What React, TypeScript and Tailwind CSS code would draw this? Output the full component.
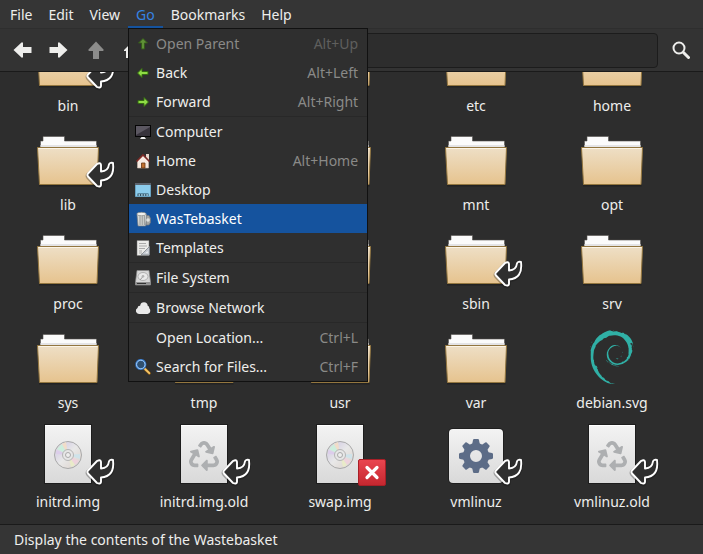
import type { ReactNode } from "react";
import { FaRecycle } from "react-icons/fa";
import { SiDebian } from "react-icons/si";

type Emblem = "link" | "broken";
type Kind = "folder" | "disc" | "backup" | "binary" | "debian";

// folders under the open menu carry no label
const files: { name?: string; kind: Kind; emblem?: Emblem }[] = [
  { name: "bin", kind: "folder", emblem: "link" },
  { kind: "folder" },
  { kind: "folder" },
  { name: "etc", kind: "folder" },
  { name: "home", kind: "folder" },
  { name: "lib", kind: "folder", emblem: "link" },
  { kind: "folder" },
  { kind: "folder" },
  { name: "mnt", kind: "folder" },
  { name: "opt", kind: "folder" },
  { name: "proc", kind: "folder" },
  { kind: "folder" },
  { kind: "folder" },
  { name: "sbin", kind: "folder", emblem: "link" },
  { name: "srv", kind: "folder" },
  { name: "sys", kind: "folder" },
  { name: "tmp", kind: "folder" },
  { name: "usr", kind: "folder" },
  { name: "var", kind: "folder" },
  { name: "debian.svg", kind: "debian" },
  { name: "initrd.img", kind: "disc", emblem: "link" },
  { name: "initrd.img.old", kind: "backup", emblem: "link" },
  { name: "swap.img", kind: "disc", emblem: "broken" },
  { name: "vmlinuz", kind: "binary", emblem: "link" },
  { name: "vmlinuz.old", kind: "backup", emblem: "link" },
];

const greenArrow = "M2.500 8 7 3.500v3h6v3H7v3z";

const upIcon = (
  <svg viewBox="0 0 16 16" className="size-4">
    <path d={greenArrow} transform="rotate(90 8 8)" fill="#5f9136" stroke="#34591b" />
  </svg>
);
const leftIcon = (
  <svg viewBox="0 0 16 16" className="size-4">
    <path d={greenArrow} fill="#8fdc45" stroke="#356b10" />
  </svg>
);
const rightIcon = (
  <svg viewBox="0 0 16 16" className="size-4">
    <path d={greenArrow} transform="rotate(180 8 8)" fill="#8fdc45" stroke="#356b10" />
  </svg>
);
const computerIcon = (
  <svg viewBox="0 0 16 16" className="size-4">
    <rect x="0.5" y="1.5" width="15" height="11" fill="#37333c" stroke="#050505" />
    <path d="M1 2h14v1L1 11z" fill="#5b5761" />
    <path d="M6.500 13h3l1.500 2h-6z" fill="#f2f2f2" />
  </svg>
);
const houseIcon = (
  <svg viewBox="0 0 16 16" className="size-4">
    <path d="M11 1h3v6h-3z" fill="#e6d6cc" />
    <path d="M2.500 7.500 8 2l5.500 5.500V15h-11z" fill="#f8ebe2" stroke="#cdb9ab" strokeWidth="0.6" />
    <path d="M6.500 15v-5h3.500v5z" fill="#c0702f" stroke="#6b3513" strokeWidth="0.8" />
    <path d="M1.500 8.500 8 2l6.500 6.500" fill="none" stroke="#7c2a26" strokeWidth="1.600" />
  </svg>
);
const desktopIcon = (
  <svg viewBox="0 0 16 16" className="size-4">
    <path d="M.500 1.500h15v13H.500z" fill="#8cccec" stroke="#6aa3c2" />
    <path d="M0 1h16v2H0z" fill="#5b636d" />
    <path d="M2.500 14V11.500h11V14z" fill="#27485c" />
    <path d="M3.500 13h9.500" stroke="#b9e4f7" strokeWidth="1.600" strokeDasharray="1.600 1" />
  </svg>
);
const basketIcon = (
  <svg viewBox="0 0 16 16" className="size-4">
    <path d="M11 4.500h3l1.500 3v4L14 14h-3z" fill="#a4a6a4" stroke="#73777c" strokeWidth="0.7" />
    <path d="M2 3.500h9.500l-.8 11.500H3z" fill="#d7d9d7" stroke="#777b80" strokeWidth="0.7" />
    <path d="M5 4.500V14M7.200 4.500V14M9.300 4.500V14" stroke="#898d8b" strokeWidth="0.9" />
    <ellipse cx="6.500" cy="3" rx="4.700" ry="1.700" fill="#f1f1ef" stroke="#868a86" strokeWidth="0.7" />
    <circle cx="13" cy="9" r="1.800" fill="#e0e2e0" />
  </svg>
);
const templateIcon = (
  <svg viewBox="0 0 16 16" className="size-4">
    <path d="M2 .500h12v15H2z" fill="#ececea" stroke="#777" strokeWidth="0.5" />
    <path d="M4 3.500h7M4 6h8M4 8.500h6M4 11h3M4 13h3" stroke="#aaa" />
    <path d="M14.500 6.500v8.500H6z" fill="#c3c8d0" stroke="#80858c" strokeWidth="0.8" />
    <path d="M12.700 11v2.300h-2.300z" fill="#f4f4f4" />
  </svg>
);
const diskIcon = (
  <svg viewBox="0 0 16 16" className="size-4">
    <path d="M2 .500h12l1.500 11.500v3H.500v-3z" fill="#d7d7d7" stroke="#8d8d8d" strokeWidth="0.7" />
    <path d="M.700 12h14.600v2.800H.700z" fill="#909090" />
    <ellipse cx="8" cy="6.500" rx="5" ry="4" fill="#e9e9e9" stroke="#a5a5a5" strokeWidth="0.8" />
    <path d="M8 6.500 5 10" stroke="#999" />
    <circle cx="8" cy="6.300" r="1.300" fill="#b3b3b3" />
    <path d="M2 13.500h9" stroke="#333" />
  </svg>
);
const cloudIcon = (
  <svg viewBox="0 0 16 16" className="size-4">
    <path
      d="M4 14a3.200 3.200 0 0 1-1.500-6 2.500 2.500 0 0 1 2.600-2.300A4 4 0 0 1 9 2.300c2.300 0 3.600 1.500 3.700 3.500 1.400.500 1.600 1.500 1.500 2.400 1.600 1 1.800 5-1.700 5.800z"
      fill="#e9e9e9"
    />
  </svg>
);
const searchFilesIcon = (
  <svg viewBox="0 0 16 16" className="size-4">
    <path d="m9.500 9.500 4.800 4.700" stroke="#8a5a12" strokeWidth="3" strokeLinecap="round" />
    <path d="m10 10 4.300 4.200" stroke="#f6c668" strokeWidth="1.800" strokeLinecap="round" />
    <circle cx="5.800" cy="5.500" r="4.500" fill="#31506e" stroke="#2f6fbe" strokeWidth="2.200" />
    <circle cx="5.800" cy="5.500" r="4.300" fill="none" stroke="#a7d0f7" strokeWidth="1" />
  </svg>
);

type MenuEntry = {
  label: string;
  icon?: ReactNode;
  keys?: string;
  disabled?: boolean;
  active?: boolean;
};

const goMenu: MenuEntry[][] = [
  [
    { label: "Open Parent", icon: upIcon, keys: "Alt+Up", disabled: true },
    { label: "Back", icon: leftIcon, keys: "Alt+Left" },
    { label: "Forward", icon: rightIcon, keys: "Alt+Right" },
  ],
  [
    { label: "Computer", icon: computerIcon },
    { label: "Home", icon: houseIcon, keys: "Alt+Home" },
    { label: "Desktop", icon: desktopIcon },
    { label: "WasTebasket", icon: basketIcon, active: true },
    { label: "Templates", icon: templateIcon },
  ],
  [{ label: "File System", icon: diskIcon }],
  [{ label: "Browse Network", icon: cloudIcon }],
  [
    { label: "Open Location...", keys: "Ctrl+L" },
    { label: "Search for Files...", icon: searchFilesIcon, keys: "Ctrl+F" },
  ],
];

const Defs = () => (
  <svg className="absolute size-0" aria-hidden="true">
    <defs>
      <linearGradient id="folder" x1="0" y1="0" x2="0" y2="1">
        <stop offset="0" stopColor="#eedfc6" />
        <stop offset="1" stopColor="#e6c38e" />
      </linearGradient>
      <linearGradient id="paper" x1="0" y1="0" x2="0" y2="1">
        <stop offset="0" stopColor="#f3f3f3" />
        <stop offset="1" stopColor="#d9d9d9" />
      </linearGradient>
      <linearGradient id="red" x1="0" y1="0" x2="0" y2="1">
        <stop offset="0" stopColor="#ea4650" />
        <stop offset="1" stopColor="#c4272f" />
      </linearGradient>
      <linearGradient id="disc" x1="0" y1="0" x2="1" y2="1">
        <stop offset="0" stopColor="#dcdcdc" />
        <stop offset="0.3" stopColor="#dcd8e6" />
        <stop offset="0.5" stopColor="#e8e8e8" />
        <stop offset="0.75" stopColor="#e2dcd8" />
        <stop offset="1" stopColor="#d6d6d6" />
      </linearGradient>
    </defs>
  </svg>
);

const FolderShape = () => (
  <>
    <path d="M3 60h58.500v1.500H3z" fill="#222" />
    <path d="M4.500 23v-7H7v-4.500h21.500V16h32v7z" fill="#fbfbfb" stroke="#55534f" strokeWidth="0.6" />
    <path d="M4.500 20h56v2.500h-56z" fill="#e4e4e6" />
    <path d="M1.500 22.500h61l-1.500 37H3.500z" fill="url(#folder)" stroke="#93763f" strokeLinejoin="round" />
    <path d="M2.500 23.500h59" stroke="#fbf4e6" />
  </>
);

const PageShape = () => (
  <>
    <rect x="8" y="2" width="48" height="60" fill="#1d1d1d" />
    <rect x="9" y="3" width="46" height="58" fill="url(#paper)" />
    <path d="M9 3.500h46" stroke="#fff" />
  </>
);

const DiscShape = () => (
  <>
    <circle cx="32" cy="33" r="13.500" fill="url(#disc)" stroke="#a9a9a9" />
    <path d="m32 33-11-6 5-5z" fill="#cdeedd" />
    <path d="m32 33-6-11 4-2z" fill="#f1ddc9" />
    <path d="m32 33-11.500-5-.500 4z" fill="#dccdeb" />
    <path d="m32 33 11 6-4 4z" fill="#eed3dc" />
    <path d="m32 33 7 10-4 2z" fill="#e9ebc9" />
    <path d="m32 33 12-1v5z" fill="#cfe3ea" />
    <circle cx="32" cy="33" r="5.500" fill="#e6e6e6" stroke="#b5b5b5" />
    <circle cx="32" cy="33" r="2.500" fill="#eee" stroke="#aaa" />
  </>
);

const teeth = [0, 45, 90, 135, 180, 225, 270, 315];

const GearShape = () => (
  <>
    <rect x="4" y="6" width="56" height="56" rx="5" fill="#1f1f1f" />
    <rect x="5" y="7" width="54" height="54" rx="4" fill="url(#paper)" />
    <circle cx="32" cy="34" r="9.500" fill="none" stroke="#5c6c87" strokeWidth="7" />
    {teeth.map((angle) => (
      <path key={angle} d="m28 23 1-5q.3-1 1-1h4q.7 0 1 1l1 5z" fill="#5c6c87" transform={`rotate(${angle} 32 34)`} />
    ))}
  </>
);

const linkArrow =
  "M52 51.500Q50.700 50 52 48.500L61 39Q64.500 37 65 40V46.500Q72.300 46 72.800 40 73.500 37 77 38 79 54.500 65 55.500V60Q64.500 62.500 61 61Z";

const LinkEmblem = () => (
  <>
    <path d={linkArrow} fill="none" stroke="#111" strokeWidth="3.500" opacity="0.300" transform="translate(0 1)" />
    <path d={linkArrow} fill="#2f2f2f" stroke="#fff" strokeWidth="1.900" strokeLinejoin="round" />
  </>
);

const BrokenEmblem = () => (
  <>
    <rect x="50.500" y="37.500" width="27" height="26" rx="1.500" fill="url(#red)" stroke="#a81f27" />
    <path d="m59 45.500 10 10M69 45.500l-10 10" stroke="#fff" strokeWidth="3.200" strokeLinecap="round" />
  </>
);

const FileIcon = ({ kind, emblem }: { kind: Kind; emblem?: Emblem }) => (
  <svg viewBox="0 0 64 64" className="size-16 overflow-visible">
    {kind === "folder" && <FolderShape />}
    {(kind === "disc" || kind === "backup") && <PageShape />}
    {kind === "disc" && <DiscShape />}
    {kind === "backup" && <FaRecycle x="17" y="19" size={30} color="#adafb1" />}
    {kind === "binary" && <GearShape />}
    {kind === "debian" && <SiDebian x="5" y="7" size={54} color="#30b0a6" />}
    {emblem === "link" && <LinkEmblem />}
    {emblem === "broken" && <BrokenEmblem />}
  </svg>
);

const GoMenu = () => (
  <div role="menu" className="absolute top-full left-0 z-10 w-60 border border-[#111] bg-[#2f2f2f]">
    {goMenu.map((group, i) => (
      <div key={i} className={i > 0 ? "border-t border-[#282828]" : ""}>
        {group.map((item) => (
          <button
            key={item.label}
            role="menuitem"
            disabled={item.disabled}
            className={`flex h-[29px] w-full items-center pr-[9px] pl-[6px] text-left ${
              item.active ? "bg-[#15539e] text-white" : item.disabled ? "text-[#8a8a88]" : "text-[#eeeeec]"
            }`}
          >
            <span className="mr-[5px] size-4">{item.icon}</span>
            <span className="flex-1">{item.label}</span>
            <span className={item.disabled ? "text-[#5f5f5e]" : "text-[#8a8a88]"}>{item.keys}</span>
          </button>
        ))}
      </div>
    ))}
  </div>
);

const MenuBar = () => (
  <nav className="flex h-7 bg-[#353535] pl-[2px]">
    {["File", "Edit", "View", "Go", "Bookmarks", "Help"].map((name) => (
      <div key={name} className="relative">
        <button
          className={`h-full border-b-2 px-2 pt-1 ${
            name === "Go" ? "border-[#15539e] text-[#3584e4]" : "border-transparent"
          }`}
        >
          {name}
        </button>
        {name === "Go" && <GoMenu />}
      </div>
    ))}
  </nav>
);

const arrow = "M.500 9 8.500 1.500q1-.500 1.500.500v4h8.500v6H10v4q-.500 1-1.500.500z";

const Toolbar = () => (
  <div className="flex h-11 items-center border-y border-t-[#2e2e2e] border-b-[#1a1a1a] bg-[#333] pr-3 pl-1">
    <button aria-label="Back" className="flex w-9 justify-center">
      <svg viewBox="0 0 19 18" className="h-[18px] w-[19px]">
        <path d={arrow} fill="#eeeeec" />
      </svg>
    </button>
    <button aria-label="Forward" className="flex w-[37px] justify-center">
      <svg viewBox="0 0 19 18" className="h-[18px] w-[19px]">
        <path d={arrow} fill="#eeeeec" transform="rotate(180 9.500 9)" />
      </svg>
    </button>
    <button aria-label="Open parent" disabled className="flex w-[37px] justify-center">
      <svg viewBox="0 0 18 18" className="size-[18px]">
        <path d={arrow} fill="#8c8c8b" transform="rotate(90 9 9)" />
      </svg>
    </button>
    <button aria-label="Home" className="flex w-[37px] justify-center">
      <svg viewBox="0 0 18 18" className="size-[18px]">
        <path d="M0 9 9 0l9 9v1h-2v7h-5v-5H7v5H2v-7H0z" fill="#eeeeec" />
      </svg>
    </button>
    <input
      aria-label="Location"
      className="ml-1 h-[35px] min-w-0 flex-1 rounded-[4px] border border-[#1c1c1c] bg-[#2d2d2d] px-2"
    />
    <button aria-label="Search" className="ml-[13px] flex h-9 w-5 items-center justify-center">
      <svg viewBox="0 0 18 18" className="size-[18px]" fill="none" stroke="#eeeeec">
        <circle cx="7" cy="7" r="5.500" strokeWidth="2" />
        <path d="m11.500 11.500 5 5" strokeWidth="3" strokeLinecap="round" />
      </svg>
    </button>
  </div>
);

export default function App() {
  return (
    <div className="flex h-screen flex-col bg-[#2d2d2d] font-['Noto_Sans',sans-serif] text-[14px] leading-5 text-[#eeeeec]">
      <Defs />
      <MenuBar />
      <Toolbar />
      <main className="flex min-h-0 flex-1 flex-col justify-end overflow-hidden pb-3">
        <ul className="grid grid-cols-[repeat(auto-fill,136px)] gap-y-[9px]">
          {files.map((file, i) => (
            <li key={i} className="flex h-[90px] flex-col items-center justify-between">
              <FileIcon kind={file.kind} emblem={file.emblem} />
              <span>{file.name}</span>
            </li>
          ))}
        </ul>
      </main>
      <footer className="flex h-[30px] items-center border-t border-[#1a1a1a] bg-[#353535] px-[14px]">
        Display the contents of the Wastebasket
      </footer>
    </div>
  );
}
